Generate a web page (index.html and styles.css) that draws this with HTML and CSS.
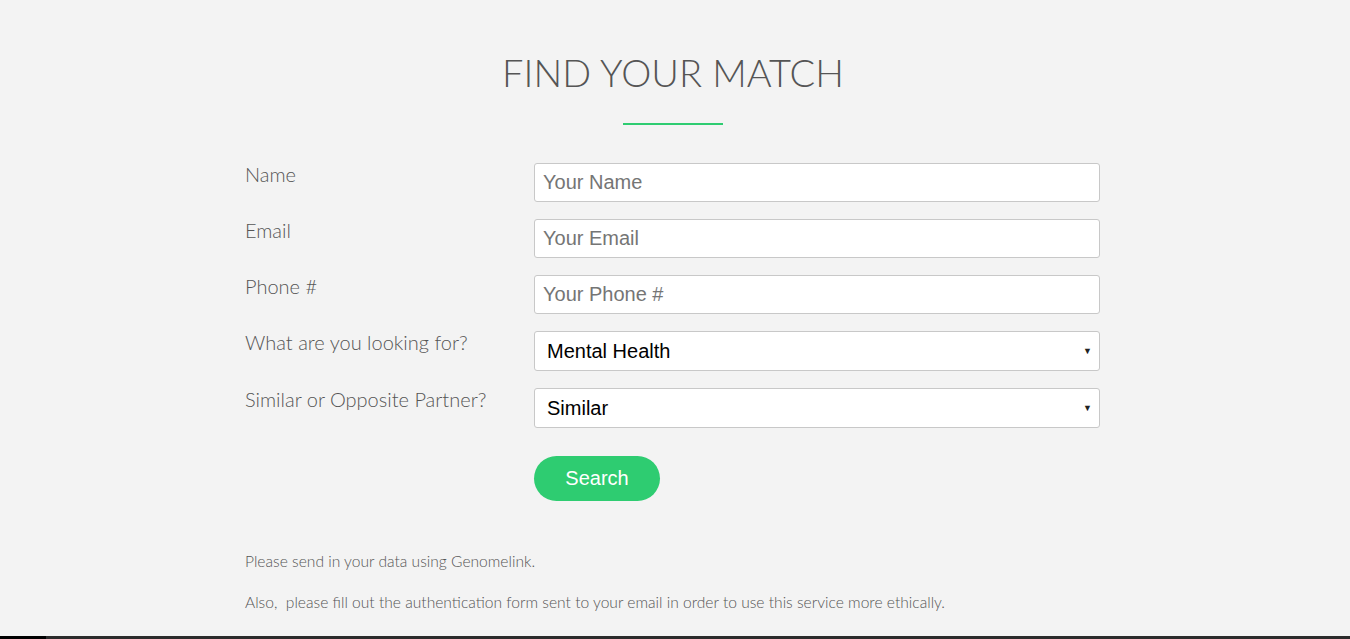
FILE: index.html
```html
<!DOCTYPE html>
<html lang="en">
<head>
<meta charset="utf-8">
<title>Find Your Match</title>
<link rel="stylesheet" href="styles.css">
</head>
<body>
<main class="page">
  <h1 class="title">FIND YOUR MATCH</h1>
  <div class="rule"></div>
  <form class="form">
    <div class="row">
      <label class="label" for="name">Name</label>
      <input class="field" id="name" type="text" placeholder="Your Name">
    </div>
    <div class="row">
      <label class="label" for="email">Email</label>
      <input class="field" id="email" type="text" placeholder="Your Email">
    </div>
    <div class="row">
      <label class="label" for="phone">Phone #</label>
      <input class="field" id="phone" type="text" placeholder="Your Phone #">
    </div>
    <div class="row">
      <label class="label" for="look">What are you looking for?</label>
      <div class="select" id="look">
        <span class="select-text">Mental Health</span>
        <span class="caret">&#9660;</span>
      </div>
    </div>
    <div class="row">
      <label class="label" for="partner">Similar or Opposite Partner?</label>
      <div class="select" id="partner">
        <span class="select-text">Similar</span>
        <span class="caret">&#9660;</span>
      </div>
    </div>
    <div class="row row-btn">
      <span></span>
      <button class="btn" type="button">Search</button>
    </div>
  </form>
  <div class="notes">
    <p class="note">Please send in your data using Genomelink.</p>
    <p class="note">Also, &nbsp;please fill out the authentication form sent to your email in order to use this service more ethically.</p>
  </div>
</main>
<div class="bottom-bar"></div>
</body>
</html>
```

FILE: styles.css
```css
html, body {
  margin: 0;
  padding: 0;
}
body {
  background: #f3f3f3;
  color: #555;
  font-family: Lato, "Liberation Sans", sans-serif;
  height: 639px;
  overflow: hidden;
  display: flex;
  flex-direction: column;
}
.page {
  flex: 1;
  display: flex;
  flex-direction: column;
  align-items: center;
  padding-top: 49px;
  padding-right: 4px;
}
.title {
  margin: 0;
  font-family: Lato, sans-serif;
  font-weight: 300;
  font-size: 38px;
  line-height: 46px;
  letter-spacing: 0;
  color: #555;
}
.rule {
  width: 100px;
  height: 2px;
  background: #2ecc71;
  margin-top: 28px;
}
.form {
  width: 856px;
  margin-top: 38px;
  display: flex;
  flex-direction: column;
  gap: 17px;
}
.row {
  display: grid;
  grid-template-columns: 289px 566px;
  align-items: start;
}
.label {
  font-family: Lato, sans-serif;
  font-weight: 300;
  font-size: 20px;
  line-height: 22px;
  color: #555;
  padding-top: 0;
}
.field {
  box-sizing: border-box;
  height: 39px;
  width: 566px;
  margin: 0;
  border: 1px solid #c8c8c8;
  border-radius: 3px;
  background: #fff;
  padding: 0 8px;
  font-family: "Liberation Sans", Arial, sans-serif;
  font-size: 20px;
  color: #222;
  outline: none;
}
.field::placeholder {
  color: #757575;
}
.select {
  box-sizing: border-box;
  height: 40px;
  width: 566px;
  border: 1px solid #c8c8c8;
  border-radius: 3px;
  background: #fff;
  display: flex;
  align-items: center;
  justify-content: space-between;
  padding: 0 7px 0 12px;
  font-family: "Liberation Sans", Arial, sans-serif;
  font-size: 20px;
  color: #000;
}
.caret {
  font-size: 9px;
  color: #222;
}
.row-btn {
  margin-top: 11px;
}
.btn {
  width: 126px;
  height: 45px;
  border: none;
  border-radius: 23px;
  background: #2ecc71;
  color: #fff;
  font-family: "Liberation Sans", Arial, sans-serif;
  font-size: 20px;
  padding: 0;
  cursor: pointer;
}
.notes {
  width: 856px;
  margin-top: 50px;
  display: flex;
  flex-direction: column;
  gap: 21px;
}
.note {
  margin: 0;
  font-family: Lato, sans-serif;
  font-weight: 300;
  font-size: 15.6px;
  line-height: 20px;
  color: #555;
}
.bottom-bar {
  height: 3px;
  background: linear-gradient(to right, #000 0, #000 46px, #2b2b2b 46px);
  flex: none;
}
```
